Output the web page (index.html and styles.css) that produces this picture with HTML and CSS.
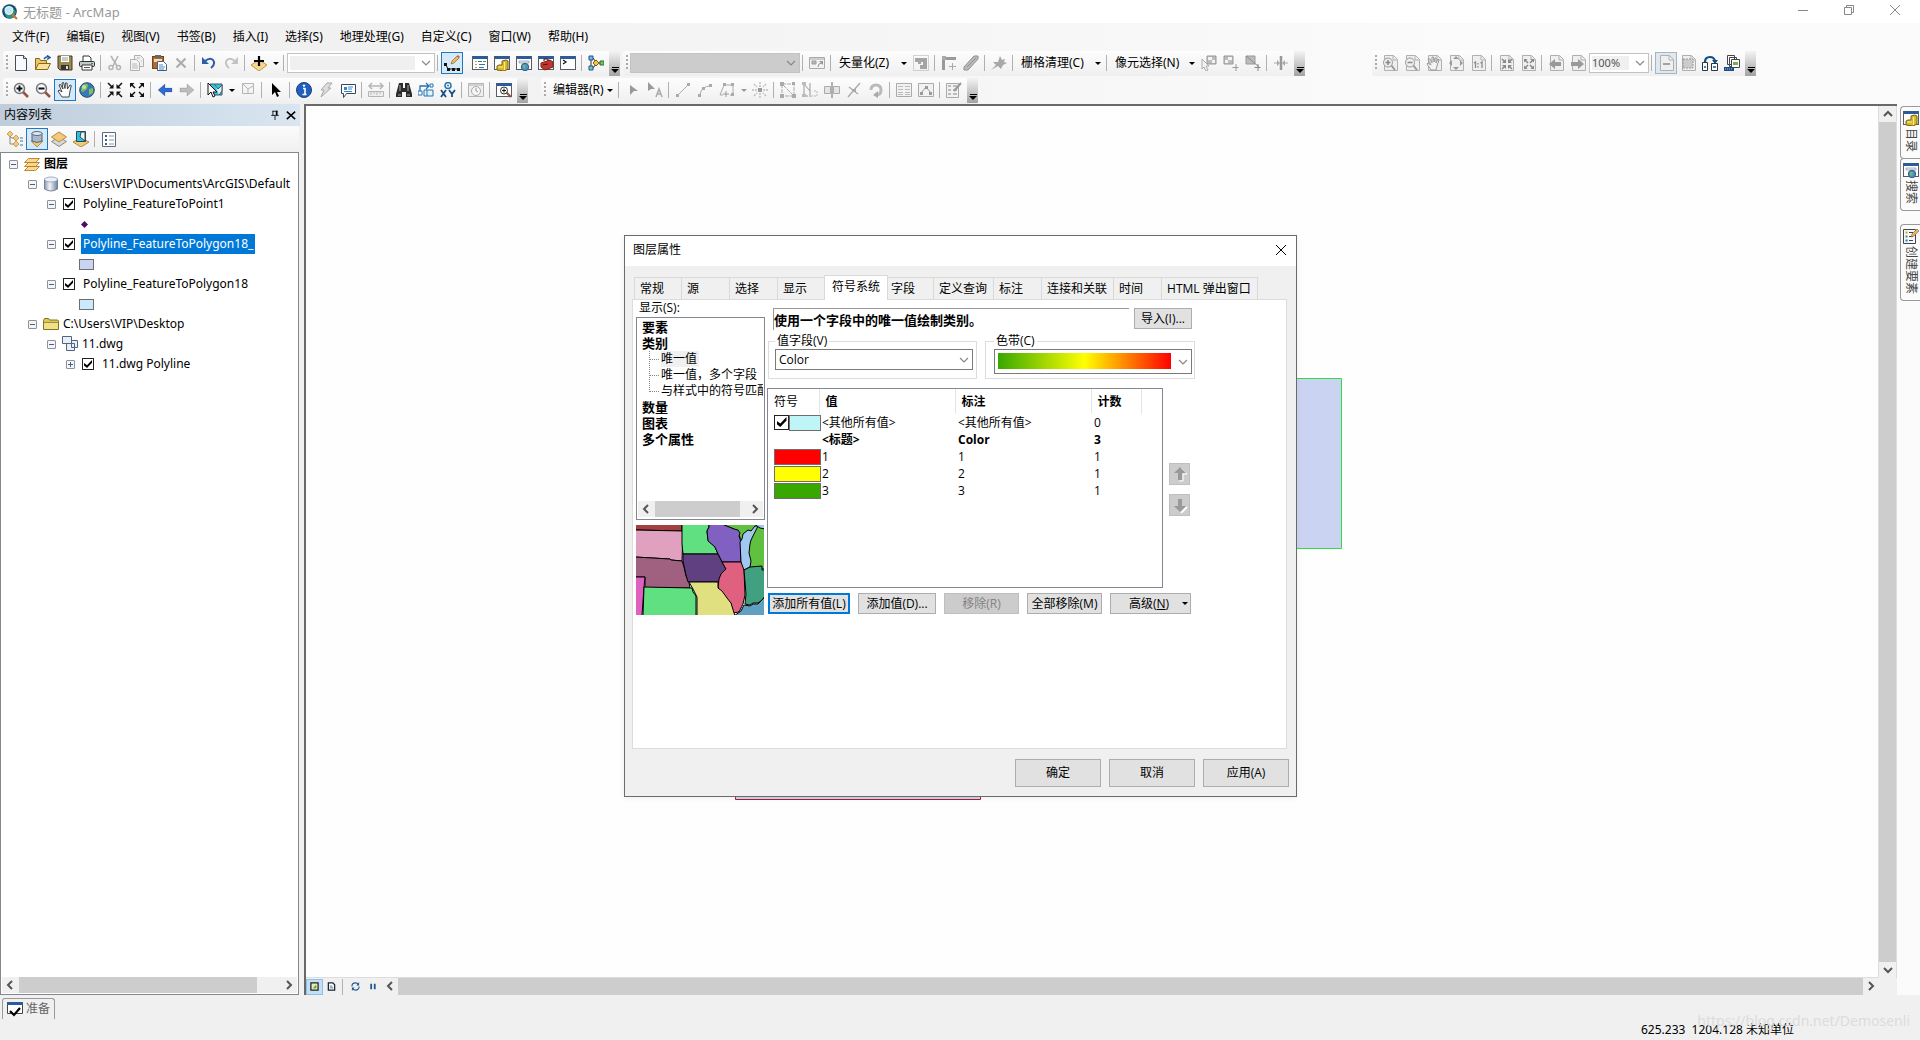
FILE: index.html
```html
<!DOCTYPE html>
<html lang="zh-CN">
<head>
<meta charset="utf-8">
<title>无标题 - ArcMap</title>
<link rel="stylesheet" href="styles.css">
</head>
<body>
<svg class="defs" aria-hidden="true">
<symbol id="logo" viewBox="0 0 16 16"><circle cx="7.500" cy="7.500" r="7.300" fill="#17476b"/><path d="M2 4q4-4 9-1l3 5-3 6-6 0q-3-4-3-10z" fill="#2f8f8a"/><circle cx="7" cy="6.500" r="4" fill="#bfe6f5" stroke="#e8f4fa"/><path d="M10 10l5 5" stroke="#c7772b" stroke-width="2.200"/></symbol>
<symbol id="new" viewBox="0 0 16 16"><path d="M2.500.5h8l3 3v12h-11z" fill="#f7fbff" stroke="#444d5c"/><path d="M10.500.5v3h3" fill="#cfdcec" stroke="#444d5c"/></symbol>
<symbol id="open" viewBox="0 0 16 16"><path d="M.5 14.500v-11h4l1 2h6v3" fill="#e9c76a" stroke="#8a6914"/><path d="M.5 14.500l3-6h12l-3 6z" fill="#fbe29a" stroke="#8a6914"/><path d="M9 4q2-3 5-2M12 .5l3 2-3 2" fill="none" stroke="#1d5a9a" stroke-width="1.500"/></symbol>
<symbol id="save" viewBox="0 0 16 16"><path d="M1 1h14v14H3l-2-2z" fill="#9b8a4d" stroke="#3f3a28"/><path d="M4 1h8v6H4z" fill="#fff"/><path d="M5 3h6M5 5h6" stroke="#999"/><path d="M4 10h8v5H4z" fill="#333"/><path d="M9 11h2v3H9z" fill="#ddd"/></symbol>
<symbol id="print" viewBox="0 0 16 16"><path d="M4 6V1h6l2 2v3" fill="#fff" stroke="#333"/><rect x=".5" y="6.500" width="15" height="5" rx="1" fill="#c4c8ce" stroke="#333"/><path d="M3 10h10v5H3z" fill="#fff" stroke="#333"/><path d="M5 12.500h6" stroke="#555"/><path d="M12 8.500h2" stroke="#2c9a3f"/></symbol>
<symbol id="cut" viewBox="0 0 16 16"><path d="M4 1l6 10M11 1L6 11" stroke="#b4b4b4" stroke-width="1.600"/><circle cx="4" cy="12.500" r="2" fill="none" stroke="#b4b4b4" stroke-width="1.500"/><circle cx="11.500" cy="12.500" r="2" fill="none" stroke="#b4b4b4" stroke-width="1.500"/></symbol>
<symbol id="copy" viewBox="0 0 16 16"><path d="M5.500.5h6l3 3v8h-9z" fill="#f0f0f0" stroke="#b0b0b0"/><path d="M1.500 4.500h6l3 3v8h-9z" fill="#f4f4f4" stroke="#b0b0b0"/><path d="M3 9h5M3 11h6M3 13h6M8 3h3M12 6h1" stroke="#b8b8b8"/></symbol>
<symbol id="paste" viewBox="0 0 16 16"><rect x="1.500" y="1.500" width="11" height="12" fill="#b8672a" stroke="#6b4420"/><path d="M4 0h6v3H4z" fill="#666"/><path d="M3 4h8v3H3z" fill="#f3dcae"/><path d="M6.500 6.500h6l3 3v6h-9z" fill="#fff" stroke="#3d5f86"/><path d="M8 10h4M8 12h6M8 14h5" stroke="#4b88c0"/></symbol>
<symbol id="del" viewBox="0 0 16 16"><path d="M3.500 3.500l9 9M12.500 3.500l-9 9" stroke="#adadad" stroke-width="2.200"/></symbol>
<symbol id="undo" viewBox="0 0 16 16"><path d="M4 6q5-4 8-1 3 4-2 8" fill="none" stroke="#2e5fa6" stroke-width="2"/><path d="M1 2v7h7z" fill="#2e5fa6"/></symbol>
<symbol id="redo" viewBox="0 0 16 16"><path d="M12 6q-5-4-8-1-3 4 2 8" fill="none" stroke="#c3c3c3" stroke-width="2"/><path d="M15 2v7H8z" fill="#c3c3c3"/></symbol>
<symbol id="add" viewBox="0 0 16 16"><path d="M8 5l8 5-8 6-8-6z" fill="#f6d58c" stroke="#c09447"/><path d="M8 1v10M3 6h10" stroke="#000" stroke-width="2.200"/></symbol>
<symbol id="edit" viewBox="0 0 16 16"><path d="M1.500 9l2.500 5h10" fill="none" stroke="#111"/><path d="M0 8h3v3H0zM3 13h3v3H3zM8 13h3v3H8zM13 13h3v3h-3z" fill="#111"/><path d="M7 9l1-3 5-5 2 2-5 5z" fill="#efb95b" stroke="#8b6a3c" stroke-width=".7"/><path d="M13 1l1-1 2 2-1 1z" fill="#d9534a"/></symbol>
<symbol id="frame" viewBox="0 0 16 16"><rect x=".5" y="1.500" width="15" height="13" fill="#fff" stroke="#555c68"/><path d="M1 1h14v3H1z" fill="#2c5b9c"/></symbol>
<symbol id="toc" viewBox="0 0 16 16"><use href="#frame"/><path d="M3 6.500h2M3 9.500h2M3 12.500h2" stroke="#d49b25"/><path d="M6 6.500h4M7 9.500h6M7 12.500h5" stroke="#2878b8"/><path d="M11 6.500h3" stroke="#46a04c"/></symbol>
<symbol id="cat" viewBox="0 0 16 16"><use href="#frame"/><path d="M8 6l4-1 2 1v8l-4 2-7-1v-4l2-1h3z" fill="#d9b82e" stroke="#77620c"/><path d="M10.500 7v8M4 12h5" stroke="#fff08a"/></symbol>
<symbol id="search" viewBox="0 0 16 16"><use href="#frame"/><path d="M3 6h10v2H3z" fill="#e8eef5" stroke="#8a96a8" stroke-width=".7"/><circle cx="9" cy="12" r="3.700" fill="#4b8fcb" stroke="#355c83"/><path d="M7 10q2-1 3 1l-1 3q-3-1-2-4z" fill="#67ba70"/></symbol>
<symbol id="tool" viewBox="0 0 16 16"><use href="#frame"/><path d="M3 8l9-3 3 2v5l-8 3-4-3z" fill="#c3382e" stroke="#7c211c"/><path d="M6 6V4h4v2M5 10l5-1" stroke="#54100d" fill="none"/></symbol>
<symbol id="py" viewBox="0 0 16 16"><use href="#frame"/><path d="M3 5l3 2-3 2" fill="none" stroke="#111" stroke-width="1.200"/></symbol>
<symbol id="model" viewBox="0 0 16 16"><path d="M3 4v8M5 3l3 4M5 13l3-4M9 8h4" stroke="#333" fill="none"/><path d="M1 1h4v4H1z" fill="#7fb2ea" stroke="#245487"/><path d="M1 11h4v4H1z" fill="#76c7d6" stroke="#245487"/><path d="M8 5l3 3-3 3-3-3z" fill="#f3c646" stroke="#80600e"/><path d="M12 6h4v4h-4z" fill="#6fc46a" stroke="#27722c"/></symbol>
<symbol id="zin" viewBox="0 0 16 16"><path d="M10 10l5 5" stroke="#98503f" stroke-width="2.500"/><circle cx="6.500" cy="6.500" r="5" fill="#f9fbff" stroke="#777" stroke-width="1.500"/><path d="M3.500 6.500h6M6.500 3.500v6" stroke="#111" stroke-width="2"/></symbol>
<symbol id="zout" viewBox="0 0 16 16"><path d="M10 10l5 5" stroke="#98503f" stroke-width="2.500"/><circle cx="6.500" cy="6.500" r="5" fill="#f9fbff" stroke="#777" stroke-width="1.500"/><path d="M3.500 6.500h6" stroke="#111" stroke-width="2"/></symbol>
<symbol id="hand" viewBox="0 0 16 16"><path d="M5 15l-4-6 1-1 3 2L2 3l1.500-.5L6 7 5 1l1.500-.5L8 6.500 8.500 1H10l.5 6L13 3l1.300.6L13 9l-1 6z" fill="#fff" stroke="#333" stroke-width=".9"/></symbol>
<symbol id="globe" viewBox="0 0 16 16"><circle cx="8" cy="8" r="7.300" fill="#3a78bd" stroke="#294c73"/><path d="M3 4q4-4 6-1l-1 4-4 3-2-1zM10 7l4-1 0 5-4 2z" fill="#7fbf53"/><circle cx="5" cy="5" r="2" fill="#d8efdc" opacity=".7"/></symbol>
<symbol id="fin" viewBox="0 0 16 16"><path d="M1 1l4 4M15 1l-4 4M1 15l4-4M15 15l-4-4" stroke="#111" stroke-width="1.500"/><path d="M6.500 2v4.500H2zM9.500 2v4.500H14zM6.500 14V9.500H2zM9.500 14V9.500H14z" fill="#111"/></symbol>
<symbol id="fout" viewBox="0 0 16 16"><path d="M2 2l4 4M14 2l-4 4M2 14l4-4M14 14l-4-4" stroke="#111" stroke-width="1.500"/><path d="M1 5.500V1h4.500zM15 5.500V1h-4.500zM1 10.500V15h4.500zM15 10.500V15h-4.500z" fill="#111"/></symbol>
<symbol id="back" viewBox="0 0 16 16"><path d="M1 8l7-6v4h7v4H8v4z" fill="currentColor" stroke="#0002"/></symbol>
<symbol id="fwd" viewBox="0 0 16 16"><path d="M15 8L8 2v4H1v4h7v4z" fill="currentColor" stroke="#0002"/></symbol>
<symbol id="sel" viewBox="0 0 16 16"><path d="M3 2h12v11H7z" fill="#35c4da" stroke="#456"/><path d="M8 3l3 4 4-4v6l-3 4" fill="#d7f4f8" stroke="#456"/><path d="M1 1v12l3-3 2 5 2-1-2-4h4z" fill="#fff" stroke="#111"/></symbol>
<symbol id="clr" viewBox="0 0 16 16"><path d="M2.500 1.500h11v10h-11zM3 2l5 5v4M8 7l5-3" fill="#f4f4f4" stroke="#b5b5b5"/></symbol>
<symbol id="ptr" viewBox="0 0 16 16"><path d="M4 1v12l3-3 2 5 2-1-2-4h4z" fill="currentColor"/></symbol>
<symbol id="info" viewBox="0 0 16 16"><circle cx="8" cy="8" r="7.500" fill="#1f5fbf" stroke="#143f80"/><path d="M7 6.500h2v6M6.500 12.500h4" stroke="#fff" stroke-width="1.600" fill="none"/><circle cx="8" cy="3.600" r="1.200" fill="#fff"/></symbol>
<symbol id="bolt" viewBox="0 0 16 16"><path d="M9 1h5l-4 5h3L3 15l3-7H3z" fill="#ddd" stroke="#aaa"/></symbol>
<symbol id="popup" viewBox="0 0 16 16"><path d="M1.500 2.500h14v9h-9l-3 4v-4h-2z" fill="#fff" stroke="#33475e"/><path d="M4 5h3v3H4z" fill="#3c84c4"/><path d="M8 5h5M8 7h4M4 9.500h8" stroke="#3c84c4"/></symbol>
<symbol id="meas" viewBox="0 0 16 16"><path d="M1 4h14M4 1L1 4l3 3M12 1l3 3-3 3" stroke="#b5b5b5" stroke-width="1.500" fill="none"/><path d="M.5 9.500h15v5H.500zM3 10v3M6 10v2M9 10v3M12 10v2" fill="#eee" stroke="#b5b5b5"/></symbol>
<symbol id="bino" viewBox="0 0 16 16"><path d="M3 1h4v5h2V1h4l3 11v3H10v-5H6v5H0v-3z" fill="#2b2b2b"/><path d="M4 3v6M12 3v6M2 13h3M11 13h3" stroke="#aaa"/></symbol>
<symbol id="route" viewBox="0 0 16 16"><path d="M2 9V4h8M8 1l3 3-3 3" fill="none" stroke="#2572ae" stroke-width="1.300"/><path d="M0 9h4v4H0zM12 2h3v3h-3z" fill="#fff" stroke="#2572ae"/><path d="M6 8h9v6H6zM9 8v6" fill="#e1f2fb" stroke="#2572ae"/></symbol>
<symbol id="xy" viewBox="0 0 16 16"><circle cx="8" cy="3.500" r="3" fill="#fff" stroke="#2572ae" stroke-width="1.500"/><circle cx="8" cy="3.500" r="1" fill="#2572ae"/><path d="M1 8l5 7M6 8l-5 7M9 8l3 4 3-4M12 12v3" stroke="#174f86" stroke-width="1.800" fill="none"/></symbol>
<symbol id="time" viewBox="0 0 16 16"><path d="M.5 1.500h15v13H.500zM1 3h14" fill="#eee" stroke="#b5b5b5"/><circle cx="8" cy="9" r="4.500" fill="#f7f7f7" stroke="#aaa"/><path d="M8 6v3l2 1" stroke="#999" fill="none"/></symbol>
<symbol id="view" viewBox="0 0 16 16"><use href="#frame"/><path d="M10 10l5 5" stroke="#98503f" stroke-width="2"/><circle cx="8" cy="8.500" r="3.500" fill="#fff" stroke="#333"/><path d="M6 8.500h4M8 6.500v4" stroke="#111"/></symbol>
<symbol id="gwin" viewBox="0 0 16 16"><path d="M.5 2.500h15v11H.500zM1 4h14" fill="#f2f2f2" stroke="#aaa"/><path d="M3 6h4v3H3z" fill="#bbb" stroke="#999"/><path d="M9 12q0-4 4-4" fill="none" stroke="#999"/><path d="M10 6h4v4z" fill="#999"/></symbol>
<symbol id="graster" viewBox="0 0 16 16"><path d="M.5.5h15v15H.500z" fill="none" stroke="#aaa" stroke-dasharray="1 1"/><path d="M2 3h12v11H7v-4h3V7H8v2H5V7H2z" fill="#a4a4a4"/></symbol>
<symbol id="gline" viewBox="0 0 16 16"><path d="M2.500 15V3.500H15" fill="none" stroke="#9a9a9a" stroke-width="3"/><path d="M1 1h4v4H1z" fill="#aaa"/><path d="M11.500 8v7M8 11.500h7" stroke="#aaa"/></symbol>
<symbol id="gbar" viewBox="0 0 16 16"><path d="M1 12L11 1h4v3L5 15H1z" fill="#bbb" stroke="#8e8e8e"/><path d="M4 12l9-9" stroke="#8e8e8e"/></symbol>
<symbol id="gpin" viewBox="0 0 16 16"><path d="M0 15l5-5-3-3 5 0 2-6 2 4 3-1-1 3 3 1-4 2-2 4-3-3z" fill="#a8a8a8"/></symbol>
<symbol id="gcell" viewBox="0 0 16 16"><path d="M6 1h9v8H6z" fill="#bcbcbc" stroke="#999"/><path d="M7 2h4v3H7zM11 5h3v3h-3z" fill="#f4f4f4"/><path d="M1 4v10l2-2 2 4 2-1-2-4h3z" fill="#f2f2f2" stroke="#aaa"/></symbol>
<symbol id="gcadd" viewBox="0 0 16 16"><path d="M1 1h9v8H1z" fill="#bcbcbc" stroke="#999"/><path d="M5 2h4v3H5zM2 5h3v3H2z" fill="#f4f4f4"/><path d="M13 9v7M9.500 12.500h6" stroke="#999"/></symbol>
<symbol id="gcdel" viewBox="0 0 16 16"><path d="M1 1h9v8H1z" fill="#bcbcbc" stroke="#999"/><path d="M1 1l13 11M13 9v7M9.500 12.500h6" stroke="#888"/></symbol>
<symbol id="gsplit" viewBox="0 0 16 16"><path d="M8 1v14" stroke="#999" stroke-width="2.500"/><path d="M1 8h5M10 8h5" stroke="#aaa"/><path d="M4 5v6l3-3zM12 5v6L9 8z" fill="#aaa"/></symbol>
<symbol id="gptr" viewBox="0 0 16 16"><path d="M5 3l8 6H9l-4 4z" fill="#999"/></symbol>
<symbol id="gptra" viewBox="0 0 16 16"><path d="M1 0l7 7H4L1 9z" fill="#999"/><path d="M9 15l3-8 3 8M10 12h4" stroke="#aaa" fill="none" stroke-width="1.500"/></symbol>
<symbol id="gseg" viewBox="0 0 16 16"><path d="M3 13L13 3" stroke="#aaa"/><path d="M1 12h3v3H1zM12 1h3v3h-3z" fill="#aaa"/></symbol>
<symbol id="garc" viewBox="0 0 16 16"><path d="M3 13q1-9 11-9" stroke="#aaa" fill="none"/><path d="M1 12h3v3H1zM5 5h3v3H5zM12 2h3v3h-3z" fill="#aaa"/></symbol>
<symbol id="gtrace" viewBox="0 0 16 16"><path d="M1 13l4-10h9v10h-3M1 13h3" stroke="#aaa" fill="none"/><path d="M4 1h3v3H4zM12 1h3v3h-3zM12 11h3v3h-3z" fill="#aaa"/><path d="M7 9v6M4 12h6" stroke="#999"/></symbol>
<symbol id="gpoint" viewBox="0 0 16 16"><path d="M6 6h4v4H6z" fill="#999"/><path d="M8 0v5M8 11v5M0 8h5M11 8h5M2 2l3 3M14 2l-3 3M2 14l3-3M14 14l-3-3" stroke="#bbb" stroke-width="1.400" stroke-dasharray="2 1"/></symbol>
<symbol id="gvert" viewBox="0 0 16 16"><path d="M2 2v12h12zM2 2h12v12" stroke="#aaa" fill="none" stroke-dasharray="4 1"/><path d="M0 0h4v4H0zM12 0h3v3h-3zM0 12h4v4H0zM12 12h4v4h-4z" fill="#aaa"/></symbol>
<symbol id="gshape" viewBox="0 0 16 16"><path d="M2 2v12h4M2 2l6 7M8 1v14" stroke="#999" fill="none"/><path d="M9 14h6V9l-4 0" stroke="#bbb" stroke-dasharray="2 1" fill="none"/><path d="M0 0h4v3H0zM0 12h4v3H0z" fill="#bbb"/></symbol>
<symbol id="gcutp" viewBox="0 0 16 16"><path d="M.5 4.500h6v7h-6zM9.500 4.500h6v7h-6z" fill="#e4e4e4" stroke="#aaa"/><path d="M8 0v16" stroke="#999" stroke-width="1.500"/></symbol>
<symbol id="gx" viewBox="0 0 16 16"><path d="M2 15L14 1M3 5l9 7" stroke="#aaa" stroke-width="1.300"/><path d="M6 7h4v3H6z" fill="#aaa"/></symbol>
<symbol id="grot" viewBox="0 0 16 16"><path d="M3 8q0-5 5-5t5 5-5 5" fill="none" stroke="#bbb" stroke-width="3"/><path d="M10 9v7l-5-3z" fill="#aaa"/></symbol>
<symbol id="gtab" viewBox="0 0 16 16"><path d="M.5 1.500h15v13H.500z" fill="#f2f2f2" stroke="#aaa"/><path d="M2 4.500h5M2 7.500h5M2 10.500h5M2 12.500h5M9 4.500h5M9 7.500h5M9 10.500h5M9 12.500h5" stroke="#bbb"/></symbol>
<symbol id="gsk" viewBox="0 0 16 16"><path d="M.5 1.500h15v13H.500z" fill="#f2f2f2" stroke="#aaa"/><path d="M3 11l5-6 5 6" stroke="#999" fill="none"/><path d="M2 10h3v3H2zM7 4h3v3H7zM11 10h3v3h-3z" fill="#999"/></symbol>
<symbol id="form" viewBox="0 0 16 16"><path d="M.5 1.500h12v14H.500z" fill="#f6f9fc" stroke="#444"/><path d="M2.500 4.500h2" stroke="#d9a020" stroke-width="2"/><path d="M2.500 8.500h2" stroke="#3a9a4a" stroke-width="2"/><path d="M2.500 12.500h2" stroke="#2878b8" stroke-width="2"/><path d="M6 4.500h4M6 8.500h4M6 12.500h4" stroke="#444"/><path d="M8 9l1-3 5-5 2 2-5 5z" fill="#e9b35e" stroke="#8a5a40" stroke-width=".6"/></symbol>
<symbol id="gform" viewBox="0 0 16 16"><path d="M.5 1.500h12v14H.500z" fill="#f2f2f2" stroke="#aaa"/><path d="M2 4h3M2 8h3M2 12h3M7 4h4M7 8h4M7 12h4" stroke="#aaa" stroke-width="1.500"/><path d="M8 9l7-8" stroke="#999" stroke-width="2"/></symbol>
<symbol id="gpage" viewBox="0 0 16 16"><path d="M2.500.5h9l4 4v11h-13z" fill="#efefef" stroke="#b0b0b0"/><path d="M11 1v4h4" fill="none" stroke="#b0b0b0"/></symbol>
<symbol id="pzin" viewBox="0 0 16 16"><use href="#gpage"/><path d="M9 10l4 5" stroke="#999" stroke-width="2"/><circle cx="6" cy="7.500" r="4.500" fill="#eee" stroke="#999"/><path d="M3.500 7.500h5M6 5v5" stroke="#888" stroke-width="1.500"/></symbol>
<symbol id="pzout" viewBox="0 0 16 16"><use href="#gpage"/><path d="M9 10l4 5" stroke="#999" stroke-width="2"/><circle cx="6" cy="7.500" r="4.500" fill="#eee" stroke="#999"/><path d="M3.500 7.500h5" stroke="#888" stroke-width="1.500"/></symbol>
<symbol id="phand" viewBox="0 0 16 16"><use href="#gpage"/><path d="M5 15L1 9l1-1 3 2-3-6h2l2 4V2h1.500L8 7l1-4h1v5l2-4 1 1-2 6-1 4z" fill="#f4f4f4" stroke="#999"/></symbol>
<symbol id="pfull" viewBox="0 0 16 16"><use href="#gpage"/><path d="M8 1l3 3H5zM8 15l3-3H5zM1 8l3-3v6zM15 8l-3-3v6z" fill="#999"/></symbol>
<symbol id="pone" viewBox="0 0 16 16"><use href="#gpage"/><path d="M4 8l1.500-1v6M10.500 8L12 7v6M8 8v1.500M8 11v1.500" fill="none" stroke="#8a8a8a" stroke-width="1.300"/></symbol>
<symbol id="pin2" viewBox="0 0 16 16"><use href="#gpage"/><path d="M4 4l3 3M14 4l-3 3M4 14l3-3M14 14l-3-3" stroke="#888" stroke-width="1.500"/><path d="M8 4v4H4zM10 4v4h4zM8 14v-4H4zM10 14v-4h4z" fill="#888"/></symbol>
<symbol id="pout2" viewBox="0 0 16 16"><use href="#gpage"/><path d="M5 5l3 3M13 5l-3 3M5 13l3-3M13 13l-3-3" stroke="#888" stroke-width="1.500"/><path d="M4 7.500V4h3.500zM14 7.500V4h-3.500zM4 10.500V14h3.500zM14 10.500V14h-3.500z" fill="#888"/></symbol>
<symbol id="pback" viewBox="0 0 16 16"><use href="#gpage"/><path d="M1 9l6-5v3h6v4H7v3z" fill="#999"/></symbol>
<symbol id="pfwd" viewBox="0 0 16 16"><use href="#gpage"/><path d="M14 9L8 4v3H1v4h7v3z" fill="#999"/></symbol>
<symbol id="pminus" viewBox="0 0 16 16"><use href="#gpage"/><path d="M5 9h7" stroke="#888" stroke-width="1.500"/></symbol>
<symbol id="pfocus" viewBox="0 0 16 16"><use href="#gpage"/><path d="M3 4h10v9H3z" fill="#ccc" stroke="#999" stroke-dasharray="2 1"/></symbol>
<symbol id="swap" viewBox="0 0 16 16"><path d="M3 7q0-5 5-5 4 0 5 4" fill="none" stroke="#134e84" stroke-width="2.200"/><path d="M10 5h6l-3 4z" fill="#134e84"/><path d="M.5 7.500h5v8h-5zM9.500 8.500h6v7h-6z" fill="#fff" stroke="#333"/><path d="M2 12h2M11 12h3" stroke="#3486c4" stroke-width="2"/></symbol>
<symbol id="ddp" viewBox="0 0 16 16"><path d="M3.500.5h7v9h-7zM5.500 2.500h7v9h-7z" fill="#fff" stroke="#444"/><path d="M7.500 4.500h8v8h-8z" fill="#fff" stroke="#444"/><path d="M9 7h5v3H9z" fill="#70b159"/><path d="M0 12h10v4H0z" fill="#224d83"/><path d="M1 14h8" stroke="#9ac4ee" stroke-dasharray="1 1"/></symbol>
<symbol id="lorder" viewBox="0 0 16 16"><path d="M3 5v8h5M3 6l5 2" stroke="#888" fill="none"/><path d="M3 0l3 3-3 3-3-3zM9 4l3 3-3 3-3-3zM9 10l3 3-3 3-3-3z" fill="#f1c878" stroke="#b58a42" stroke-width=".7"/><path d="M13 7h3M13 10h3M13 14h3" stroke="#2878b8"/></symbol>
<symbol id="lsource" viewBox="0 0 16 16"><path d="M2 10h12l-6 6z" fill="#f1c878" stroke="#b58a42"/><path d="M3 2v8q5 3 10 0V2z" fill="#a9b9cc" stroke="#56657a"/><ellipse cx="8" cy="2.500" rx="5" ry="2" fill="#e3eaf3" stroke="#56657a"/></symbol>
<symbol id="lvis" viewBox="0 0 16 16"><path d="M8 6l7.500 4.500L8 15.500.5 10.500z" fill="#d8d8d8" stroke="#888"/><path d="M8 1l7.500 5L8 11 .5 6z" fill="#f3ca7b" stroke="#b58a42"/></symbol>
<symbol id="lsel" viewBox="0 0 16 16"><path d="M0 11l8-4 8 4-8 5z" fill="#f3ca7b" stroke="#b58a42"/><path d="M3.500.5h9v10h-9z" fill="#29c4dd" stroke="#345"/><path d="M8 1l4 0v9L7 6z" fill="#dff7fa" stroke="#345"/></symbol>
<symbol id="lopt" viewBox="0 0 16 16"><path d="M1.500 1.500h13v14h-13z" fill="#fff" stroke="#5a6b80"/><path d="M4 4h2v2H4zM4 8h2v2H4zM4 12h2v2H4z" fill="#3c5f85"/><path d="M8 5h5M8 9h5M8 13h5" stroke="#8494a8"/></symbol>
<symbol id="layers" viewBox="0 0 16 16"><path d="M.5 14.500l4-4h11l-4 4zM.5 10.500l4-4h11l-4 4zM.5 6.500l4-4h11l-4 4z" fill="#fbd890" stroke="#b67f2a" stroke-width=".9"/></symbol>
<symbol id="db" viewBox="0 0 16 16"><linearGradient id="dg"><stop offset="0" stop-color="#8a98ac"/><stop offset=".4" stop-color="#f2f5fa"/><stop offset="1" stop-color="#72829a"/></linearGradient><path d="M1.500 3v10q6.500 4 13 0V3z" fill="url(#dg)" stroke="#5f6f87" stroke-width=".8"/><ellipse cx="8" cy="3.500" rx="6.500" ry="2.500" fill="#eaf0f8" stroke="#8a9ab0" stroke-width=".8"/></symbol>
<symbol id="folder" viewBox="0 0 16 16"><path d="M.5 13.500v-9l1-2h4l1 1.500h8l1 1v8.500z" fill="#dcc758" stroke="#82741f"/><path d="M1 7h14v6H1z" fill="#f0e08a"/><path d="M1 6.500h14" stroke="#a09030"/></symbol>
<symbol id="dwg" viewBox="0 0 16 16"><path d="M.5.5h9v7h-9zM9.500 4.500h6v7h-6zM4.500 7.500h8v7h-8z" fill="#e8eff8" stroke="#53657e"/></symbol>
<symbol id="cl" viewBox="0 0 8 10"><path d="M6 1L2 5l4 4" fill="none" stroke="#555" stroke-width="2"/></symbol>
<symbol id="cr" viewBox="0 0 8 10"><path d="M2 1l4 4-4 4" fill="none" stroke="#555" stroke-width="2"/></symbol>
<symbol id="cu" viewBox="0 0 10 8"><path d="M1 6l4-4 4 4" fill="none" stroke="#555" stroke-width="2"/></symbol>
<symbol id="cd" viewBox="0 0 10 8"><path d="M1 2l4 4 4-4" fill="none" stroke="#555" stroke-width="2"/></symbol>
<symbol id="cdt" viewBox="0 0 10 8"><path d="M1 2l4 4 4-4" fill="none" stroke="currentColor" stroke-width="1.200"/></symbol>
<symbol id="x" viewBox="0 0 12 12"><path d="M1 1l10 10M11 1L1 11" fill="none" stroke="currentColor"/></symbol>
<symbol id="xb" viewBox="0 0 12 12"><path d="M1 2l10 9M11 2L1 11" fill="none" stroke="#000" stroke-width="1.800"/></symbol>
<symbol id="ready" viewBox="0 0 16 16"><path d="M.5 1.500h15v11H.500z" fill="#fff" stroke="#444"/><path d="M0 1h16v3H0z" fill="#2c5b9c"/><path d="M3 10l4 4 6-7" fill="none" stroke="#000" stroke-width="2.200"/></symbol>
</svg>

<div class="app">
<header class="titlebar">
  <svg class="i"><use href="#logo"/></svg><h1>无标题 - ArcMap</h1>
  <button class="win" aria-label="最小化"><svg viewBox="0 0 12 12"><path d="M1 6.500h10" stroke="currentColor"/></svg></button>
  <button class="win" aria-label="还原"><svg viewBox="0 0 12 12"><path d="M1.500 3.500h7v7h-7zM3.500 3V1.500h7v7H9" fill="none" stroke="currentColor"/></svg></button>
  <button class="win" aria-label="关闭"><svg><use href="#x"/></svg></button>
</header>
<div class="bars">
<nav class="menubar"><button>文件(F)</button><button>编辑(E)</button><button>视图(V)</button><button>书签(B)</button><button>插入(I)</button><button>选择(S)</button><button>地理处理(G)</button><button>自定义(C)</button><button>窗口(W)</button><button>帮助(H)</button></nav>
<div class="row">
  <div class="tb"><i class="grip"></i><button class="b" aria-label="新建"><svg><use href="#new"/></svg></button><button class="b" aria-label="打开"><svg><use href="#open"/></svg></button><button class="b" aria-label="保存"><svg><use href="#save"/></svg></button><button class="b" aria-label="打印"><svg><use href="#print"/></svg></button><i class="sep"></i><button class="b" aria-label="剪切" disabled><svg><use href="#cut"/></svg></button><button class="b" aria-label="复制" disabled><svg><use href="#copy"/></svg></button><button class="b" aria-label="粘贴"><svg><use href="#paste"/></svg></button><button class="b" aria-label="删除" disabled><svg><use href="#del"/></svg></button><i class="sep"></i><button class="b" aria-label="撤消"><svg><use href="#undo"/></svg></button><button class="b" aria-label="恢复" disabled><svg><use href="#redo"/></svg></button><i class="sep"></i><button class="b" aria-label="添加数据"><svg><use href="#add"/></svg></button><button class="drop" aria-label="添加数据选项"><i class="caret"></i></button><i class="sep"></i><span class="combo scale"><select aria-label="比例尺" disabled><option></option></select><svg><use href="#cdt"/></svg></span><i class="sep"></i><button class="b on" aria-label="编辑器工具条"><svg><use href="#edit"/></svg></button><i class="sep hide"></i><button class="b" aria-label="内容列表"><svg><use href="#toc"/></svg></button><button class="b" aria-label="目录"><svg><use href="#cat"/></svg></button><button class="b" aria-label="搜索"><svg><use href="#search"/></svg></button><button class="b" aria-label="工具箱"><svg><use href="#tool"/></svg></button><button class="b" aria-label="Python"><svg><use href="#py"/></svg></button><i class="sep"></i><button class="b" aria-label="模型构建器"><svg><use href="#model"/></svg></button><button class="more" aria-label="更多"><i class="caret"></i></button></div>
  <div class="tb near"><i class="grip"></i><span class="combo raster"><select aria-label="栅格图层" disabled><option></option></select><svg><use href="#cdt"/></svg></span><i class="sep"></i><button class="b" aria-label="栅格颜色" disabled><svg><use href="#gwin"/></svg></button><i class="sep"></i><button class="mb w1">矢量化(Z)<i class="caret"></i></button><button class="b" aria-label="预览" disabled><svg><use href="#graster"/></svg></button><i class="sep"></i><button class="b" aria-label="追踪" disabled><svg><use href="#gline"/></svg></button><button class="b" aria-label="点间追踪" disabled><svg><use href="#gbar"/></svg></button><i class="sep"></i><button class="b" aria-label="形状识别" disabled><svg><use href="#gpin"/></svg></button><i class="sep"></i><button class="mb w2">栅格清理(C)<i class="caret"></i></button><i class="sep"></i><button class="mb w2">像元选择(N)<i class="caret"></i></button><button class="b" aria-label="选择像元" disabled><svg><use href="#gcell"/></svg></button><button class="b" aria-label="添加像元" disabled><svg><use href="#gcadd"/></svg></button><button class="b" aria-label="移除像元" disabled><svg><use href="#gcdel"/></svg></button><i class="sep"></i><button class="b" aria-label="线宽" disabled><svg><use href="#gsplit"/></svg></button><button class="more" aria-label="更多"><i class="caret"></i></button></div>
  <div class="tb layout"><i class="grip"></i><button class="b" aria-label="放大页面" disabled><svg><use href="#pzin"/></svg></button><button class="b" aria-label="缩小页面" disabled><svg><use href="#pzout"/></svg></button><button class="b" aria-label="平移页面" disabled><svg><use href="#phand"/></svg></button><button class="b" aria-label="整个页面" disabled><svg><use href="#pfull"/></svg></button><button class="b" aria-label="缩放至100%" disabled><svg><use href="#pone"/></svg></button><i class="sep"></i><button class="b" aria-label="固定放大" disabled><svg><use href="#pin2"/></svg></button><button class="b" aria-label="固定缩小" disabled><svg><use href="#pout2"/></svg></button><i class="sep"></i><button class="b" aria-label="上一页" disabled><svg><use href="#pback"/></svg></button><button class="b" aria-label="下一页" disabled><svg><use href="#pfwd"/></svg></button><span class="combo zoom"><select aria-label="缩放比例" disabled><option>100%</option></select><svg><use href="#cdt"/></svg></span><i class="sep"></i><button class="b on off" aria-label="草图模式" disabled><svg><use href="#pminus"/></svg></button><button class="b" aria-label="焦点数据框" disabled><svg><use href="#pfocus"/></svg></button><button class="b" aria-label="更改布局"><svg><use href="#swap"/></svg></button><button class="b" aria-label="数据驱动页面"><svg><use href="#ddp"/></svg></button><button class="more" aria-label="更多"><i class="caret"></i></button></div>
</div>
<div class="row">
  <div class="tb"><i class="grip"></i><button class="b" aria-label="放大"><svg><use href="#zin"/></svg></button><button class="b" aria-label="缩小"><svg><use href="#zout"/></svg></button><button class="b on" aria-label="平移"><svg><use href="#hand"/></svg></button><button class="b" aria-label="全图"><svg><use href="#globe"/></svg></button><i class="sep"></i><button class="b" aria-label="固定比例放大"><svg><use href="#fin"/></svg></button><button class="b" aria-label="固定比例缩小"><svg><use href="#fout"/></svg></button><i class="sep"></i><button class="b blue" aria-label="后退"><svg><use href="#back"/></svg></button><button class="b grey" aria-label="前进" disabled><svg><use href="#fwd"/></svg></button><i class="sep"></i><button class="b" aria-label="选择要素"><svg><use href="#sel"/></svg></button><button class="drop" aria-label="选择选项"><i class="caret"></i></button><button class="b" aria-label="清除选择" disabled><svg><use href="#clr"/></svg></button><i class="sep"></i><button class="b" aria-label="选择元素"><svg><use href="#ptr"/></svg></button><i class="sep"></i><button class="b" aria-label="识别"><svg><use href="#info"/></svg></button><button class="b" aria-label="超链接" disabled><svg><use href="#bolt"/></svg></button><button class="b" aria-label="HTML弹出窗口"><svg><use href="#popup"/></svg></button><i class="sep"></i><button class="b" aria-label="测量" disabled><svg><use href="#meas"/></svg></button><i class="sep"></i><button class="b" aria-label="查找"><svg><use href="#bino"/></svg></button><button class="b" aria-label="查找路径"><svg><use href="#route"/></svg></button><button class="b" aria-label="转到XY"><svg><use href="#xy"/></svg></button><i class="sep"></i><button class="b" aria-label="时间滑块" disabled><svg><use href="#time"/></svg></button><i class="sep"></i><button class="b" aria-label="查看器窗口"><svg><use href="#view"/></svg></button><button class="more" aria-label="更多"><i class="caret"></i></button></div>
  <div class="tb editor"><i class="grip"></i><button class="mb w0">编辑器(R)<i class="caret"></i></button><i class="sep"></i><button class="b" aria-label="编辑工具" disabled><svg><use href="#gptr"/></svg></button><button class="b" aria-label="编辑注记" disabled><svg><use href="#gptra"/></svg></button><i class="sep"></i><button class="b" aria-label="直线段" disabled><svg><use href="#gseg"/></svg></button><button class="b" aria-label="弧线段" disabled><svg><use href="#garc"/></svg></button><button class="b" aria-label="追踪线" disabled><svg><use href="#gtrace"/></svg></button><button class="drop grey" aria-label="追踪选项" disabled><i class="caret"></i></button><button class="b" aria-label="点" disabled><svg><use href="#gpoint"/></svg></button><i class="sep"></i><button class="b" aria-label="编辑折点" disabled><svg><use href="#gvert"/></svg></button><button class="b" aria-label="整形" disabled><svg><use href="#gshape"/></svg></button><button class="b" aria-label="裁剪面" disabled><svg><use href="#gcutp"/></svg></button><button class="b" aria-label="分割" disabled><svg><use href="#gx"/></svg></button><button class="b" aria-label="旋转" disabled><svg><use href="#grot"/></svg></button><i class="sep"></i><button class="b" aria-label="属性" disabled><svg><use href="#gtab"/></svg></button><button class="b" aria-label="草图属性" disabled><svg><use href="#gsk"/></svg></button><i class="sep"></i><button class="b" aria-label="创建要素" disabled><svg><use href="#gform"/></svg></button><button class="more" aria-label="更多"><i class="caret"></i></button></div>
</div>
</div>

<main class="work">
<aside class="toc">
  <div class="tochead"><h2>内容列表</h2><button aria-label="自动隐藏"><svg viewBox="0 0 12 12"><path d="M3.500 1v5.500M8 1v5.500M3 1.500h6M1.500 6.500h9M6 7v5" stroke="#000" fill="none"/><path d="M7 1h2v5H7z"/></svg></button><button aria-label="关闭"><svg><use href="#xb"/></svg></button></div>
  <div class="toctools"><button class="b" aria-label="按绘制顺序列出"><svg><use href="#lorder"/></svg></button><button class="b on" aria-label="按源列出"><svg><use href="#lsource"/></svg></button><button class="b" aria-label="按可见性列出"><svg><use href="#lvis"/></svg></button><button class="b" aria-label="按选择列出"><svg><use href="#lsel"/></svg></button><i class="sep"></i><button class="b" aria-label="选项"><svg><use href="#lopt"/></svg></button></div>
  <div class="treebox">
    <ul class="tree">
      <li><div class="n"><i class="ex"></i><svg class="i"><use href="#layers"/></svg><b>图层</b></div>
      <ul>
        <li><div class="n"><i class="ex"></i><svg class="i"><use href="#db"/></svg><span>C:\Users\VIP\Documents\ArcGIS\Default</span></div>
        <ul>
          <li><label class="n"><i class="ex"></i><input type="checkbox" checked><span class="t">Polyline_FeatureToPoint1</span></label><div class="sym"><svg class="dot" viewBox="0 0 7 7"><path d="M3.500 0L7 3.500 3.500 7 0 3.500z" fill="#4b0f6b"/></svg></div></li>
          <li><label class="n"><i class="ex"></i><input type="checkbox" checked><span class="t picked">Polyline_FeatureToPolygon18_</span></label><div class="sym"><i class="sw lilac"></i></div></li>
          <li><label class="n"><i class="ex"></i><input type="checkbox" checked><span class="t">Polyline_FeatureToPolygon18</span></label><div class="sym"><i class="sw sky"></i></div></li>
        </ul></li>
        <li><div class="n"><i class="ex"></i><svg class="i"><use href="#folder"/></svg><span>C:\Users\VIP\Desktop</span></div>
        <ul>
          <li><div class="n"><i class="ex"></i><svg class="i"><use href="#dwg"/></svg><span>11.dwg</span></div>
          <ul><li><label class="n"><i class="ex plus"></i><input type="checkbox" checked><span class="t">11.dwg Polyline</span></label></li></ul></li>
        </ul></li>
      </ul></li>
    </ul>
    <div class="hs"><svg class="ch"><use href="#cl"/></svg><i class="thumb toct"></i><svg class="ch"><use href="#cr"/></svg></div>
  </div>
</aside>
<section class="mapframe">
  <div class="canvas">
    <svg class="shapes" width="640" height="430"><path d="M332.500.5h302v170h-302z" fill="#cad3f1" stroke="#32dc46"/><path d="M28.500 300.500h245v121h-245z" fill="#cad3f1" stroke="#b01c2c"/></svg>
  </div>
  <div class="vs"><svg class="cv"><use href="#cu"/></svg><i class="thumb"></i><svg class="cv"><use href="#cd"/></svg></div>
  <div class="mapbar">
    <button class="v on" aria-label="数据视图"><svg viewBox="0 0 10 10"><path d="M1 1h8v8H1z" fill="#e9ecb0" stroke="#222" stroke-width="1.400"/><path d="M3 7l4-4v4z" fill="#5a9a5a"/></svg></button>
    <button class="v" aria-label="布局视图"><svg viewBox="0 0 10 10"><path d="M1.500 1h5l2 2v6h-7z" fill="#fff" stroke="#222" stroke-width="1.400"/><path d="M3 4.500h3M3 6.500h4" stroke="#2878b8"/></svg></button>
    <i class="sep wide"></i>
    <button class="v" aria-label="刷新"><svg viewBox="0 0 10 10"><path d="M1 5q0-4 4-4 2 0 3 1.500M9 5q0 4-4 4Q3 9 2 7.500" fill="none" stroke="#1f5a92" stroke-width="1.200"/><path d="M9 0v4H6zM1 10V6h3z" fill="#1f5a92"/></svg></button>
    <button class="v" aria-label="暂停"><svg viewBox="0 0 10 10"><path d="M3.500 2v6M7.500 2v6" stroke="#1f5a92" stroke-width="2"/></svg></button>
    <div class="hs"><svg class="ch"><use href="#cl"/></svg><i class="thumb"></i><svg class="ch"><use href="#cr"/></svg></div>
  </div>
</section>
<aside class="side"><button><svg class="i"><use href="#cat"/></svg>目录</button><button><svg class="i"><use href="#search"/></svg>搜索</button><button class="gap"><svg class="i"><use href="#form"/></svg>创建要素</button></aside>
</main>
<footer class="foot">
  <button class="ready"><svg class="i"><use href="#ready"/></svg>准备</button>
  <div class="status"><span>625.233&nbsp; 1204.128 未知单位</span></div>
  <span class="mark">https://blog.csdn.net/Demosenli</span>
</footer>

<section class="dialog" role="dialog" aria-labelledby="dt">
  <header class="dtitle"><h2 id="dt">图层属性</h2><button aria-label="关闭"><svg><use href="#x"/></svg></button></header>
  <div class="dbody">
  <div class="tabs" role="tablist"><button role="tab">常规</button><button role="tab">源</button><button role="tab">选择</button><button role="tab">显示</button><button role="tab" class="active" aria-selected="true">符号系统</button><button role="tab">字段</button><button role="tab">定义查询</button><button role="tab">标注</button><button role="tab">连接和关联</button><button role="tab">时间</button><button role="tab">HTML 弹出窗口</button></div>
  <div class="page">
    <div class="left">
      <h3>显示(S):</h3>
      <div class="kinds">
        <ul><li>要素</li><li>类别<ul><li><span class="cur">唯一值</span></li><li>唯一值，多个字段</li><li>与样式中的符号匹配</li></ul></li><li>数量</li><li>图表</li><li>多个属性</li></ul>
        <div class="hs"><svg class="ch"><use href="#cl"/></svg><i class="thumb kt"></i><svg class="ch"><use href="#cr"/></svg></div>
      </div>
      <svg class="states" viewBox="0 0 128 90"><g stroke="#000" stroke-linejoin="round"><path d="M85-1h44v45h-25V12l-6-8z" fill="#60c040"/><path d="M-1-1h47v7L-1 5z" fill="#a04040"/><path d="M-1 5l48 1-1 30-11-1-1-1-35-2z" fill="#e0a0c0"/><path d="M-1 32l35 2 1 1 11 1 2 6 2 9 3 6 1 6H9V52H-1z" fill="#a06080"/><path d="M-1 52h10l-1 10-2 28v1h-7z" fill="#e060c0"/><path d="M8 62l48 1 1 4 3 4v20H7z" fill="#60e080"/><path d="M46-1h27v3l-2 4 1 9 4 4 3 3 3 7-35 0-1-10z" fill="#60e080"/><path d="M73-1h13l12 5 4 1 2 3-1 3 2 6v20H86l-2-4-2-4-3-7-7-6-1-10 2-4z" fill="#8060c0"/><path d="M104 17l2-3 1-5 5-4 3 1 4-5h3l-4 8-3 6-1 4-1 9 2 8-1 6-6 3-2-2-1-6z" fill="#a0c8f0"/><path d="M118-1h11v5l-5-1z" fill="#a0c8f0"/><path d="M47 29h35l2 4 2 4 4 7-5 5-2 8H52l-2-7-3-14z" fill="#604080"/><path d="M86 37h19l3 8 1 25-2 9-4 8-6 1-2-10-5-5-3-5-5-5 1-9 2-5 5-5z" fill="#e06080"/><path d="M53 57h29l0 6 4 3 5 7 4 5 4 13H61V72l-4-8z" fill="#e0e080"/><path d="M108 45l6-3 12-1v4l3 0v26l-3 4-4 3-5 0-3 2-5-1 1-10z" fill="#40a080"/><path d="M98 91l7-5 3-6 6 1 3-2 5 0 4-4 3-3v19z" fill="#60a0c0"/></g></svg>
    </div>
    <div class="right">
      <div class="head"><strong>使用一个字段中的唯一值绘制类别。</strong><button class="btn">导入(I)...</button></div>
      <div class="groups">
        <fieldset class="g1"><legend><label for="vf">值字段(V)</label></legend><span class="combo field"><select id="vf"><option>Color</option></select><svg><use href="#cdt"/></svg></span></fieldset>
        <fieldset class="g2"><legend><label for="ramp">色带(C)</label></legend><span class="combo ramp"><select id="ramp"><option></option></select><svg><use href="#cdt"/></svg></span></fieldset>
      </div>
      <div class="tablerow">
        <div class="tbox"><table>
          <colgroup><col class="c1"><col class="c2"><col class="c2"><col class="c3"><col></colgroup>
          <thead><tr><th class="lt">符号</th><th>值</th><th>标注</th><th>计数</th><th></th></tr></thead>
          <tbody>
          <tr><td><span class="pair"><input type="checkbox" checked aria-label="其他所有值"><i class="chip cyan"></i></span></td><td>&lt;其他所有值&gt;</td><td>&lt;其他所有值&gt;</td><td>0</td><td></td></tr>
          <tr class="hd"><td></td><td>&lt;标题&gt;</td><td>Color</td><td>3</td><td></td></tr>
          <tr><td><i class="chip red"></i></td><td>1</td><td>1</td><td>1</td><td></td></tr>
          <tr><td><i class="chip yel"></i></td><td>2</td><td>2</td><td>1</td><td></td></tr>
          <tr><td><i class="chip grn"></i></td><td>3</td><td>3</td><td>1</td><td></td></tr>
          </tbody></table></div>
        <div class="moves"><button disabled aria-label="上移"><svg viewBox="0 0 16 16"><path d="M9 2l6 6h-4v7H7" fill="none" stroke="#fff"/><path d="M8 1l6 6h-4v7H6V7H2z" fill="#999"/></svg></button><button disabled aria-label="下移"><svg viewBox="0 0 16 16"><path d="M9 16l6-6" fill="none" stroke="#fff" stroke-width="2"/><path d="M8 15l6-6h-4V2H6v7H2z" fill="#999"/></svg></button></div>
      </div>
      <div class="acts"><button class="btn def">添加所有值(L)</button><button class="btn a2">添加值(D)...</button><button class="btn a3" disabled>移除(R)</button><button class="btn a3">全部移除(M)</button><button class="btn a5"><span>高级(<u>N</u>)</span><i class="caret"></i></button></div>
    </div>
  </div>
  <div class="dfoot"><button class="btn">确定</button><button class="btn">取消</button><button class="btn">应用(A)</button></div>
  </div>
</section>
</div>
</body>
</html>
```
FILE: styles.css
```css
* { box-sizing: border-box; }
body, h1, h2, h3, ul, fieldset { margin: 0; padding: 0; }
body, button, select, input {
  font-family: "Noto Sans", "Noto Sans CJK SC", sans-serif;
  font-size: 12px;
  line-height: 16px;
  color: #000;
}
ul { list-style: none; }
button { border: 0; padding: 0; background: none; white-space: nowrap; }
svg { display: block; flex: none; }
h1, h2, h3 { font-size: 12px; font-weight: 400; }
.defs { position: absolute; width: 0; height: 0; }
.i { width: 16px; height: 16px; }

.app { position: relative; display: flex; flex-direction: column; min-height: 100vh; background: linear-gradient(90deg, #f0f0f0 10%, #fbfbfb 80%); overflow: hidden; }
.titlebar { display: flex; align-items: center; height: 23px; background: #fff; color: #999; padding: 0 2px; }
.titlebar h1 { flex: 1; font-size: 13px; padding-left: 5px; }
.win { display: grid; place-items: center; width: 46px; height: 20px; margin-bottom: 3px; color: #888; }
.win svg { width: 12px; height: 12px; }
.menubar { display: flex; gap: 1px; height: 28px; padding-left: 4px; }
.menubar button { padding: 0 8px; }

/* toolbars */
.row { display: flex; height: 25px; margin-bottom: 2px; }
.row + .row { height: 26px; margin-bottom: 0; }
.tb { display: flex; align-items: center; margin-left: 3px; padding-bottom: 1px; background: linear-gradient(#fdfdfd, #efefef); border-radius: 3px; flex: none; }
.row + .row .tb { padding-bottom: 2px; }
.tb.layout { margin-left: 67px; }
.tb.editor { margin-left: 13px; }
.grip { width: 7px; height: 16px; background: repeating-linear-gradient(#aaa 0 2px, transparent 2px 4px) 3px 0 / 2px 100% no-repeat; }
.sep { width: 6px; height: 16px; background: linear-gradient(#b0b0b0, #b0b0b0) 2px 0 / 1px 100% no-repeat; flex: none; }
.sep.hide { background: none; }
.sep.wide { width: 7px; }
.b { display: grid; place-items: center; width: 22px; height: 22px; flex: none; }
.b svg { width: 16px; height: 16px; }
.b.on { border: 1px solid #1f78c1; background: #d5e9f8; }
.b.off { border-color: #a8b4be; background: #dfe8ef; }
.blue { color: #2f6bd0; }
.grey { color: #bdbdbd; }
.drop { width: 11px; height: 22px; display: grid; place-items: center; }
.caret { width: 0; height: 0; border: 3px solid transparent; border-top-color: #000; border-bottom: 0; }
.grey .caret { border-top-color: #999; }
.more { align-self: stretch; display: flex; align-items: flex-end; justify-content: center; width: 11px; margin: 0 0 -1px 2px; padding-bottom: 3px; background: linear-gradient(#f4f4f4, #a2a2a2); }
.more .caret { border-width: 4px 4px 0; }
.more .caret::before { content: ""; display: block; width: 7px; height: 1px; margin: -6px 0 0 -3px; background: #000; }
.mb { display: flex; align-items: center; justify-content: space-between; height: 22px; padding: 0 3px 0 5px; }
.w0 { min-width: 68px; }
.w1 { min-width: 76px; }
.w2 { min-width: 88px; }
.combo { display: grid; align-items: center; }
.combo > * { grid-area: 1 / 1; }
.combo select { appearance: none; width: 100%; height: 100%; border: 1px solid #c3c3c3; border-radius: 0; background: #fff; padding: 0 3px; margin: 0; opacity: 1; color: #000; }
.combo svg { width: 10px; height: 8px; justify-self: end; margin-right: 4px; pointer-events: none; color: #888; }
.scale { width: 148px; height: 20px; }
.scale select { background: linear-gradient(#f0f0f0, #f0f0f0) 2px 2px / 125px 14px no-repeat #fff; }
.raster { width: 170px; height: 20px; }
.raster select { background: #ccc; }
.zoom { width: 60px; height: 20px; }
.zoom select { font-size: 11px; color: #555; padding: 0 2px; background: linear-gradient(#f0f0f0, #f0f0f0) 2px 2px / 37px 14px no-repeat #fff; }

/* work area */
.work { flex: 1; display: flex; min-height: 0; }
.toc { width: 300px; display: flex; flex-direction: column; flex: none; padding-right: 1px; }
.tochead { display: flex; align-items: center; height: 22px; margin-right: -1px; padding: 0 1px 0 4px; background: linear-gradient(90deg, #bfcddb, #d9e6f2); }
.tochead h2 { flex: 1; }
.tochead button { width: 16px; height: 16px; display: grid; place-items: center; }
.tochead svg { width: 10px; height: 12px; }
.toctools { display: flex; align-items: center; height: 26px; padding-left: 4px; background: linear-gradient(#fbfbfb, #f0f0f0); }
.treebox { flex: 1; display: flex; flex-direction: column; border: 1px solid #828790; background: #fff; padding: 1px; }
.tree { flex: 1; overflow: hidden; padding-left: 7px; }
.tree ul { padding-left: 19px; }
.n { display: flex; align-items: center; height: 20px; gap: 4px; white-space: nowrap; }
.n .i { margin-left: 2px; }
.ex { width: 9px; height: 9px; border: 1px solid #919191; border-radius: 1px; background: linear-gradient(#3c5fa8, #3c5fa8) 1px 3px / 5px 1px no-repeat #f5f5f5; flex: none; }
.ex.plus { background: linear-gradient(#3c5fa8, #3c5fa8) 1px 3px / 5px 1px no-repeat, linear-gradient(#3c5fa8, #3c5fa8) 3px 1px / 1px 5px no-repeat #f5f5f5; }
input[type=checkbox] { appearance: none; width: 12px; height: 12px; margin: 0; border: 1px solid #222; background: #fff; display: grid; place-items: center; flex: none; }
input[type=checkbox]::after { content: ""; width: 8px; height: 8px; background: #000; clip-path: polygon(0 38%, 38% 66%, 100% 0, 100% 35%, 38% 100%, 0 70%); }
.n input { margin-left: 3px; }
.t { padding: 0 2px; margin-left: 2px; line-height: 20px; }
.picked { background: #0078d7; color: #fff; }
.sym { height: 20px; display: flex; align-items: center; padding-left: 32px; }
.sym .dot { width: 7px; height: 7px; margin-left: 2px; }
.sw { width: 15px; height: 11px; border: 1px solid #6e6e6e; }
.lilac { background: #cad3f1; }
.sky { background: #cce8fc; }

.hs { display: flex; align-items: stretch; height: 16px; background: #f0f0f0; flex: none; }
.thumb { flex: 1; background: #cdcdcd; }
.ch { width: 8px; height: 10px; margin: 3px 4px; }
.toct { flex: none; width: 238px; margin-left: 1px; margin-right: auto; }

.mapframe { flex: 1; display: grid; grid-template: 1fr 17px / 1fr 18px; margin-left: 4px; border-top: 2px solid #696969; border-left: 2px solid #696969; min-width: 0; background: #f0f0f0; }
.canvas { position: relative; background: #fefefe; border-bottom: 1px solid #ddd; border-right: 1px solid #ddd; }
.shapes { position: absolute; left: 401px; top: 272px; }
.vs { display: flex; flex-direction: column; align-items: center; border-right: 1px solid #ddd; }
.vs .thumb { align-self: stretch; }
.cv { width: 10px; height: 8px; margin: 4px 0; }
.mapbar { grid-column: 1; display: flex; align-items: center; }
.mapbar .hs { flex: 1; align-self: stretch; height: auto; margin-left: 1px; }
.v { width: 17px; height: 16px; display: grid; place-items: center; }
.v.on { background: #c3dff5; border: 1px solid #8fc0e8; }
.v svg { width: 9px; height: 9px; }
.side { width: 20px; margin-left: 3px; padding-top: 2px; flex: none; }
.side button { writing-mode: vertical-rl; text-orientation: sideways; display: flex; align-items: center; justify-content: flex-start; width: 20px; height: 53px; padding: 3px 0; gap: 2px; border: 1px solid #999; border-right: 0; border-radius: 4px 0 0 4px; color: #444; margin-bottom: -1px; line-height: 18px; }
.side .gap { margin-top: 14px; height: 77px; }

.foot { position: relative; height: 45px; background: #f0f0f0; padding: 3px 0 0 2px; }
.ready { display: flex; align-items: center; gap: 3px; height: 21px; width: 53px; padding-left: 4px; border: 1px solid #999; border-bottom: 0; border-radius: 3px 3px 0 0; color: #666; }
.status { display: flex; justify-content: flex-end; padding: 3px 126px 0 0; }
.mark { position: absolute; right: 10px; top: 16px; font-size: 14px; line-height: 20px; color: #dcdcdc; }

/* layer properties window */
.dialog { position: absolute; left: 624px; top: 235px; width: 673px; border: 1px solid #6b6b6b; background: #f0f0f0; box-shadow: 0 1px 6px #0001; }
.dialog, .dialog button, .dialog select { font-family: "Open Sans", "Noto Sans CJK SC", sans-serif; }
.dtitle { display: flex; align-items: center; height: 30px; padding: 0 9px 2px 8px; background: #fff; }
.dtitle h2 { flex: 1; }
.dtitle svg { width: 12px; height: 12px; }
.dbody { padding: 9px 7px; }
.tabs { display: flex; align-items: flex-end; height: 24px; padding-left: 2px; }
.tabs button { height: 22px; min-width: 48px; padding: 0 6px 0 5px; text-align: left; border: 1px solid #d9d9d9; border-width: 1px 1px 0 0; }
.tabs button:first-child { border-left-width: 1px; }
.tabs .active { height: 25px; width: 64px; margin: 0 -2px -1px; padding: 0 7px 2px; background: #fff; z-index: 1; border-left-width: 1px; }
.page { display: flex; gap: 3px; height: 450px; padding: 0 0 0 3px; background: #fff; border: 1px solid #dcdcdc; margin-right: 2px; }
.left { width: 129px; flex: none; }
.left h3 { height: 17px; padding: 0 3px; }
.kinds { height: 203px; border: 1px solid #828790; padding: 1px 1px 2px; display: flex; flex-direction: column; overflow: hidden; }
.kinds > ul { flex: 1; padding-left: 4px; font-size: 13px; font-weight: 700; line-height: 16px; white-space: nowrap; overflow: hidden; }
.kinds ul ul { margin-left: 7px; font-size: 12px; font-weight: 400; border-left: 1px dotted #888; height: 41px; margin-bottom: 7px; }
.kinds ul ul li { display: flex; align-items: center; height: 16px; }
.kinds ul ul li::before { content: ""; width: 9px; margin-right: 2px; border-top: 1px dotted #888; flex: none; }
.cur { background: #f0f0f0; padding-right: 2px; }
.kt { flex: none; width: 85px; margin-left: 1px; margin-right: auto; }
.states { width: 128px; height: 90px; margin-top: 5px; }
.right { width: 427px; padding-top: 8px; }
.btn { height: 21px; border: 1px solid #adadad; background: #e1e1e1; }
.btn:disabled { background: #ccc; border-color: #bfbfbf; color: #838383; }
.head { display: flex; justify-content: space-between; padding: 0 3px 0 5px; }
.head strong { width: 356px; border: 1px solid #999; border-width: 1px 0 0 1px; font-size: 13px; line-height: 22px; height: 22px; }
.head .btn { width: 58px; }
.groups { display: flex; gap: 8px; margin-top: 4px; }
.groups fieldset { height: 45px; border: 1px solid #dcdcdc; min-width: 0; padding: 1px 3px 0 6px; }
.groups legend { padding: 0 2px; line-height: 14px; height: 14px; }
.g1 { width: 209px; }
.g2 { width: 210px; }
.groups .g2 { padding: 1px 2px 0 8px; }
.groups select { border-color: #7a7a7a; }
.field { height: 21px; }
.ramp { height: 25px; }
.ramp select { background: linear-gradient(90deg, #38a800, #ffff00 50%, #ff0000) 3px 3px / 173px 16px no-repeat #fff; }
.tablerow { display: flex; gap: 6px; margin-top: 9px; }
.tbox { width: 396px; height: 200px; margin-left: -1px; border: 1px solid #828790; }
.moves { display: flex; flex-direction: column; gap: 9px; padding-top: 75px; }
.moves button { width: 21px; height: 22px; display: grid; place-items: center; background: #ccc; border: 1px solid #bfbfbf; }
.moves svg { width: 16px; height: 16px; }
table { width: 100%; table-layout: fixed; border-collapse: collapse; }
.c1 { width: 51px; }
.c2 { width: 136px; }
.c3 { width: 50px; }
th { height: 25px; padding: 0 6px; text-align: left; font-weight: 700; border-right: 1px solid #e5e5e5; }
th:last-child { border-right: 0; }
th.lt { font-weight: 400; }
td { height: 17px; padding: 0 0 0 3px; line-height: 16px; }
td:first-child { padding-left: 6px; }
.hd td { font-weight: 700; }
.chip { display: block; width: 47px; height: 16px; border: 1px solid #6e6e6e; }
.pair { display: flex; width: 47px; }
.pair input { width: 15px; height: 15px; }
.pair .chip { width: 32px; }
.pair input::after { width: 10px; height: 10px; }
.cyan { background: #c0f5f7; }
.red { background: #f00; }
.yel { background: #ff0; }
.grn { background: #38a800; }
.acts { display: flex; gap: 8px; margin-top: 5px; }
.acts .def { width: 82px; border: 2px solid #0078d7; }
.a2 { width: 78px; }
.a3 { width: 75px; }
.a5 { width: 81px; display: flex; align-items: center; padding: 0 2px 0 18px; justify-content: space-between; }
.dfoot { display: flex; justify-content: flex-end; gap: 8px; margin-top: 10px; }
.dfoot .btn { width: 86px; height: 28px; }
```
